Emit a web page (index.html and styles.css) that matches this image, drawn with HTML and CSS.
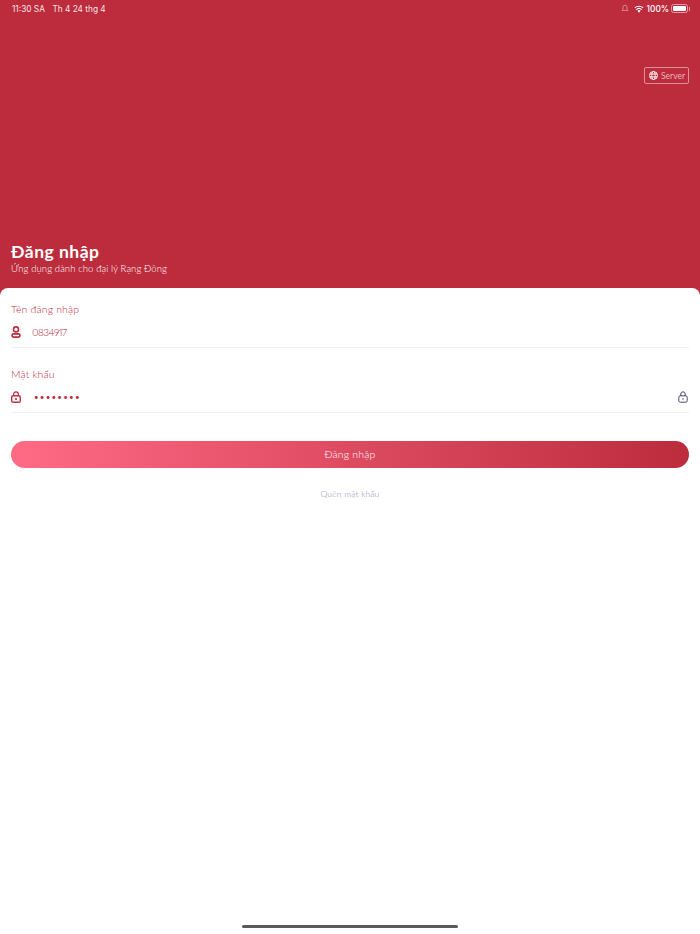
FILE: index.html
```html
<!DOCTYPE html>
<html lang="vi">
<head>
    <meta charset="UTF-8">
    <meta name="viewport" content="width=device-width, initial-scale=1.0">
    <title>Đăng nhập</title>
    <link rel="stylesheet" href="styles.css">
</head>
<body>
    <div class="app">
        <header class="hero">
            <div class="status-bar">
                <div class="status-left">
                    <span>11:30 SA</span>
                    <span>Th 4 24 thg 4</span>
                </div>
                <div class="status-right">
                    <svg class="icon-moon" width="8" height="9" viewBox="0 0 8 9">
                        <path d="M4 1.2a2 2 0 0 1 2 2v2l1 1.2H1l1-1.2v-2a2 2 0 0 1 2-2z" fill="none" stroke="#dd8f99" stroke-width="0.9"/>
                    </svg>
                    <svg class="icon-wifi" width="10" height="8" viewBox="0 0 11 9">
                        <path d="M5.5 8.6 3.7 6.6a2.6 2.6 0 0 1 3.6 0z" fill="#fff"/>
                        <path d="M2.4 5.2a4.5 4.5 0 0 1 6.2 0M.8 3.3a6.9 6.9 0 0 1 9.4 0" fill="none" stroke="#fff" stroke-width="1.3"/>
                    </svg>
                    <span>100%</span>
                    <div class="battery"><div class="battery-level"></div></div>
                </div>
            </div>
            <div class="server-row">
                <button class="server-btn" type="button">
                    <svg width="9" height="9" viewBox="0 0 10 10" fill="none" stroke="#fff" stroke-width="1">
                        <circle cx="5" cy="5" r="4.4"/>
                        <ellipse cx="5" cy="5" rx="1.9" ry="4.4"/>
                        <path d="M0.8 3.4h8.4M0.8 6.6h8.4"/>
                    </svg>
                    <span>Server</span>
                </button>
            </div>
            <div class="hero-title">
                <h1>Đăng nhập</h1>
                <p>Ứng dụng dành cho đại lý Rạng Đông</p>
            </div>
        </header>

        <main class="card">
            <form class="login-form">
                <label class="field-label" for="username">Tên đăng nhập</label>
                <div class="field">
                    <svg class="field-icon" width="10" height="12" viewBox="0 0 10 12" fill="none" stroke="#bc2c3d" stroke-width="1.6">
                        <circle cx="5" cy="3.4" r="2.5"/>
                        <rect x="1" y="7.9" width="8" height="3.2" rx="1.6"/>
                    </svg>
                    <input id="username" class="field-input" type="text" value="0834917">
                </div>

                <label class="field-label" for="password">Mật khẩu</label>
                <div class="field">
                    <svg class="field-icon" width="10" height="12" viewBox="0 0 10 12">
                        <path d="M2.6 5V3.2a2.4 2.4 0 0 1 4.8 0V5" fill="none" stroke="#bc2c3d" stroke-width="1.2"/>
                        <rect x="0.7" y="4.7" width="8.6" height="6.6" rx="1.6" fill="none" stroke="#bc2c3d" stroke-width="1.4"/>
                        <circle cx="5" cy="8" r="1.1" fill="#bc2c3d"/>
                    </svg>
                    <input id="password" class="field-input field-password" type="password" value="12345678">
                    <svg class="field-toggle" width="10" height="12" viewBox="0 0 10 12" fill="none" stroke="#4d4467" stroke-width="1">
                        <path d="M2.8 5V3a2.2 2.2 0 0 1 4.4 0v2"/>
                        <rect x="0.8" y="4.8" width="8.4" height="6.4" rx="1.5"/>
                        <path d="M5 7.2v1.6"/>
                    </svg>
                </div>

                <button class="submit-btn" type="submit">Đăng nhập</button>
                <a class="forgot-link" href="#">Quên mật khẩu</a>
            </form>
        </main>

        <div class="home-indicator"></div>
    </div>
</body>
</html>
```

FILE: styles.css
```css
* {
    box-sizing: border-box;
}
body {
    margin: 0;
    font-family: Lato, "Noto Sans", sans-serif;
    background-color: #fff;
}
.app {
    position: relative;
    display: flex;
    flex-direction: column;
    height: 934px;
    overflow: hidden;
}
.hero {
    display: flex;
    flex-direction: column;
    height: 296px;
    padding: 0 11px 21px 11px;
    background-color: #bc2c3d;
    color: #fff;
}
.status-bar {
    display: flex;
    justify-content: space-between;
    align-items: center;
    height: 17px;
    font-family: Inter, sans-serif;
    font-size: 8.3px;
}
.status-left {
    display: flex;
    gap: 7.5px;
    padding-left: 1px;
    color: #f6e3e5;
}
.status-right {
    display: flex;
    align-items: center;
    gap: 3px;
    font-weight: 500;
}
.icon-moon {
    margin-right: 2px;
}
.battery {
    position: relative;
    width: 17px;
    height: 9px;
    margin-left: -1px;
    margin-right: 1px;
    padding: 1px;
    border: 1px solid #e09aa3;
    border-radius: 2.5px;
}
.battery::after {
    content: "";
    position: absolute;
    right: -3px;
    top: 1.5px;
    width: 1px;
    height: 4px;
    background-color: #e09aa3;
}
.battery-level {
    height: 100%;
    background-color: #fff;
    border-radius: 1px;
}
.server-row {
    display: flex;
    justify-content: flex-end;
    margin-top: 50px;
}
.server-btn {
    display: flex;
    align-items: center;
    gap: 3px;
    width: 45px;
    height: 17px;
    padding: 0 0 0 4px;
    background: none;
    border: 1px solid #dd8f99;
    border-radius: 2px;
    color: #e9b4bb;
    font-family: inherit;
    font-size: 8.5px;
}
.hero-title {
    margin-top: auto;
}
.hero-title h1 {
    margin: 0;
    font-size: 17.5px;
    font-weight: 700;
    line-height: 20px;
    letter-spacing: 0.5px;
}
.hero-title p {
    margin: 1px 0 0 0;
    font-size: 9.5px;
    font-weight: 300;
    line-height: 12px;
    letter-spacing: 0.1px;
    color: #fff;
}
.card {
    flex: 1;
    margin-top: -8px;
    padding: 15px 11px 0 11px;
    background-color: #fff;
    border-radius: 8px 8px 0 0;
}
.login-form {
    display: flex;
    flex-direction: column;
}
.field-label {
    font-size: 10.5px;
    font-weight: 300;
    line-height: 13px;
    letter-spacing: 0.15px;
    color: #bc2c3d;
}
.field {
    display: flex;
    align-items: center;
    height: 32px;
    margin-bottom: 20px;
    border-bottom: 1px solid #f0f0f0;
}
.field-icon {
    flex-shrink: 0;
}
.field-input {
    flex: 1;
    min-width: 0;
    margin-left: 11px;
    padding: 0;
    border: none;
    outline: none;
    background: none;
    font-family: inherit;
    font-size: 10px;
    font-weight: 300;
    font-variant-numeric: proportional-nums;
    letter-spacing: -0.5px;
    color: #b02233;
}
.field-password {
    margin-left: 13px;
    font-size: 8px;
    font-weight: 400;
    letter-spacing: 1.2px;
    color: #bc2c3d;
}
.field-toggle {
    flex-shrink: 0;
    margin-right: 1px;
}
.submit-btn {
    height: 27px;
    margin-top: 8px;
    padding: 0 0 1px 0;
    border: none;
    border-radius: 14px;
    background: linear-gradient(90deg, #ff6a85 0%, #bc2c3d 100%);
    color: #fff;
    font-family: inherit;
    font-size: 10.5px;
    font-weight: 300;
    letter-spacing: 0.2px;
}
.forgot-link {
    margin-top: 21px;
    text-align: center;
    font-size: 8.5px;
    font-weight: 300;
    line-height: 11px;
    letter-spacing: 0.2px;
    color: #8f8ba8;
    text-decoration: none;
}
.home-indicator {
    position: absolute;
    left: 242px;
    bottom: 6px;
    width: 216px;
    height: 3px;
    border-radius: 2px;
    background-color: #5a5a5a;
}
```
